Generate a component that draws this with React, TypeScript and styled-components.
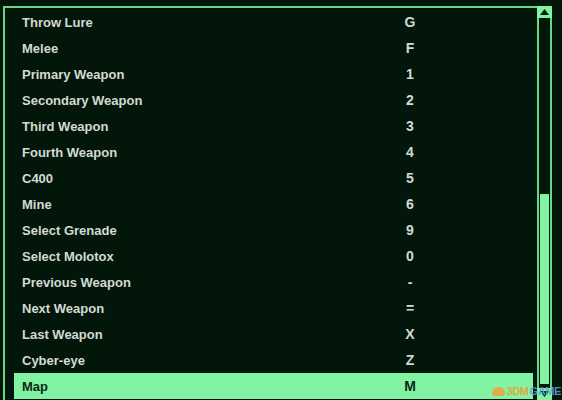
import * as React from "react";
import styled, { createGlobalStyle } from "styled-components";

interface IBinding {
  id: number;
  action: string;
  key: string;
}

const bindings: IBinding[] = [
  { id: 1, action: "Throw Lure", key: "G" },
  { id: 2, action: "Melee", key: "F" },
  { id: 3, action: "Primary Weapon", key: "1" },
  { id: 4, action: "Secondary Weapon", key: "2" },
  { id: 5, action: "Third Weapon", key: "3" },
  { id: 6, action: "Fourth Weapon", key: "4" },
  { id: 7, action: "C400", key: "5" },
  { id: 8, action: "Mine", key: "6" },
  { id: 9, action: "Select Grenade", key: "9" },
  { id: 10, action: "Select Molotox", key: "0" },
  { id: 11, action: "Previous Weapon", key: "-" },
  { id: 12, action: "Next Weapon", key: "=" },
  { id: 13, action: "Last Weapon", key: "X" },
  { id: 14, action: "Cyber-eye", key: "Z" },
  { id: 15, action: "Map", key: "M" },
];

const SELECTED_ID = 15;

const mapBindingsToRows = (list: IBinding[]) => {
  return list.map((b) => (
    <Row key={b.id} $active={b.id === SELECTED_ID}>
      <Action>{b.action}</Action>
      <KeyCap>{b.key}</KeyCap>
    </Row>
  ));
};

export default function App() {
  return (
    <>
      <GlobalStyle />
      <Screen>
        <Frame>
          <List>{mapBindingsToRows(bindings)}</List>
          <Scrollbar>
            <ArrowButton>
              <svg width="9" height="6" viewBox="0 0 9 6">
                <polygon points="4.5,0 9,6 0,6" fill="#072010" />
              </svg>
            </ArrowButton>
            <Track>
              <Thumb $offset={176} $size={190} />
            </Track>
            <ArrowButton>
              <svg width="9" height="6" viewBox="0 0 9 6">
                <polygon points="0,0 9,0 4.5,6" fill="#072010" />
              </svg>
            </ArrowButton>
          </Scrollbar>
        </Frame>
        <Watermark>
          <WatermarkIcon />
          <Orange>3DM</Orange>
          <Blue>GAME</Blue>
        </Watermark>
      </Screen>
    </>
  );
}

const GlobalStyle = createGlobalStyle`
  html, body {
    margin: 0;
    padding: 0;
    background: #03160a;
  }
`;

const Screen = styled.div`
  position: relative;
  width: 562px;
  height: 400px;
  overflow: hidden;
  background: #03160a;
  padding: 6px 0 0 3px;
  box-sizing: border-box;
  font-family: "Liberation Sans", Arial, sans-serif;
`;

const Frame = styled.div`
  display: flex;
  width: 549px;
  height: 394px;
  box-sizing: border-box;
  border-top: 2px solid #66d888;
  border-left: 2px solid #66d888;
`;

const List = styled.div`
  width: 519px;
  padding: 1px 0 0 9px;
  margin-right: 4px;
  display: flex;
  flex-direction: column;
`;

const Row = styled.div<{ $active?: boolean }>`
  display: grid;
  grid-template-columns: 380px 32px 1fr;
  align-items: center;
  height: 26px;
  flex-shrink: 0;
  background: ${(p) => (p.$active ? "#82f3a2" : "transparent")};
  color: ${(p) => (p.$active ? "#0b2a13" : "#d3dad2")};
`;

const Action = styled.span`
  padding-left: 8px;
  font-size: 13px;
  font-weight: 700;
`;

const KeyCap = styled.span`
  text-align: center;
  font-size: 14px;
  font-weight: 700;
`;

const Scrollbar = styled.div`
  width: 15px;
  margin-top: -2px;
  display: flex;
  flex-direction: column;
`;

const ArrowButton = styled.div`
  height: 12px;
  flex-shrink: 0;
  background: #82f3a2;
  display: flex;
  align-items: center;
  justify-content: center;
`;

const Track = styled.div`
  flex: 1;
  position: relative;
  border-left: 2px solid #66d888;
  border-right: 2px solid #66d888;
`;

const Thumb = styled.div<{ $offset: number; $size: number }>`
  position: absolute;
  left: 1px;
  right: 1px;
  top: ${(p) => p.$offset}px;
  height: ${(p) => p.$size}px;
  background: #82f3a2;
`;

const Watermark = styled.div`
  position: absolute;
  right: 1px;
  bottom: 3px;
  display: flex;
  align-items: center;
  gap: 1px;
  font-size: 11px;
  font-weight: 700;
  letter-spacing: -0.4px;
  opacity: 0.85;
`;

const WatermarkIcon = styled.span`
  width: 13px;
  height: 9px;
  border-radius: 6px 6px 3px 3px;
  background: #f0a23a;
  margin-right: 1px;
`;

const Orange = styled.span`
  color: #f29a30;
`;

const Blue = styled.span`
  color: #5aa6d8;
`;
